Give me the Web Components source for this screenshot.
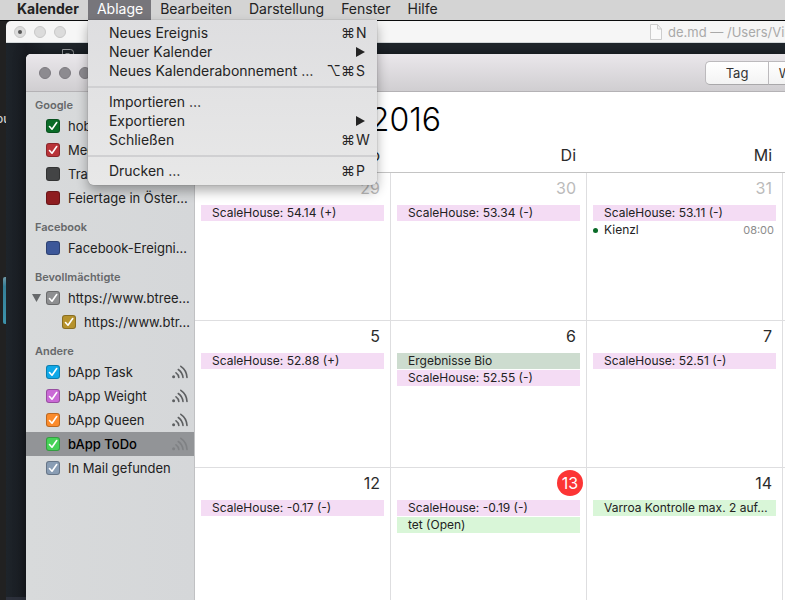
<!DOCTYPE html>
<html lang="de">
<head>
<meta charset="utf-8">
<title>Kalender</title>
<style>
  html, body { margin: 0; height: 100%; }
  body {
    font-family: Inter, "Liberation Sans", sans-serif;
    font-size: 13px;
    color: #222;
    background: #212121;
    overflow: hidden;
  }
</style>
</head>
<body>
<desk-top>
  <menu-bar slot="bar">
    <menu-title strong>Kalender</menu-title>
    <menu-title open>Ablage
      <drop-menu slot="menu">
        <menu-entry mod="⌘" key="N">Neues Ereignis</menu-entry>
        <menu-entry sub>Neuer Kalender</menu-entry>
        <menu-entry mod="⌥⌘" key="S">Neues Kalenderabonnement …</menu-entry>
        <menu-line></menu-line>
        <menu-entry>Importieren …</menu-entry>
        <menu-entry sub>Exportieren</menu-entry>
        <menu-entry mod="⌘" key="W">Schließen</menu-entry>
        <menu-line></menu-line>
        <menu-entry mod="⌘" key="P">Drucken …</menu-entry>
      </drop-menu>
    </menu-title>
    <menu-title>Bearbeiten</menu-title>
    <menu-title>Darstellung</menu-title>
    <menu-title>Fenster</menu-title>
    <menu-title>Hilfe</menu-title>
  </menu-bar>

  <edge-scraps></edge-scraps>
  <editor-window>de.md — /Users/Vin</editor-window>

  <calendar-window>
    <seg-control slot="tools"></seg-control>
    <side-section slot="side" heading="Google">
      <side-item color="#0a6b27" checked>hobby</side-item>
      <side-item color="#b93338" checked>Medizin</side-item>
      <side-item color="#434445">Training</side-item>
      <side-item color="#8e1d20">Feiertage in Öster…</side-item>
    </side-section>
    <side-section slot="side" heading="Facebook">
      <side-item color="#3c5799">Facebook-Ereigni…</side-item>
    </side-section>
    <side-section slot="side" heading="Bevollmächtigte">
      <side-item color="#8e8f91" checked expanded>https://www.btree…</side-item>
      <side-item color="#b6922c" checked nested>https://www.btr…</side-item>
    </side-section>
    <side-section slot="side" heading="Andere">
      <side-item color="#0fa8e8" checked feed>bApp Task</side-item>
      <side-item color="#ca69d6" checked feed>bApp Weight</side-item>
      <side-item color="#fb8b2b" checked feed>bApp Queen</side-item>
      <side-item color="#46d257" checked feed selected>bApp ToDo</side-item>
      <side-item color="#899db4" checked>In Mail gefunden</side-item>
    </side-section>

    <month-view month="September" year="2016">
      <day-cell day="29" outside first><cal-event>ScaleHouse: 54.14 (+)</cal-event></day-cell>
      <day-cell day="30" outside first><cal-event>ScaleHouse: 53.34 (-)</cal-event></day-cell>
      <day-cell day="31" outside first><cal-event>ScaleHouse: 53.11 (-)</cal-event><cal-event kind="timed" time="08:00">Kienzl</cal-event></day-cell>
      <day-cell first></day-cell>
      <day-cell day="5"><cal-event>ScaleHouse: 52.88 (+)</cal-event></day-cell>
      <day-cell day="6"><cal-event kind="sage">Ergebnisse Bio</cal-event><cal-event>ScaleHouse: 52.55 (-)</cal-event></day-cell>
      <day-cell day="7"><cal-event>ScaleHouse: 52.51 (-)</cal-event></day-cell>
      <day-cell></day-cell>
      <day-cell day="12"><cal-event>ScaleHouse: -0.17 (-)</cal-event></day-cell>
      <day-cell day="13" today><cal-event>ScaleHouse: -0.19 (-)</cal-event><cal-event kind="green">tet (Open)</cal-event></day-cell>
      <day-cell day="14"><cal-event kind="green">Varroa Kontrolle max. 2 auf…</cal-event></day-cell>
      <day-cell></day-cell>
    </month-view>
  </calendar-window>
</desk-top>

<script>
function define(name, render) {
  customElements.define(name, class extends HTMLElement {
    constructor() {
      super();
      this.attachShadow({ mode: 'open' });
    }
    connectedCallback() {
      this.shadowRoot.innerHTML = render(this);
    }
  });
}
const attr = (el, name) => el.getAttribute(name) || '';

define('desk-top', () => `
  <style>
    :host { display: flex; flex-direction: column; height: 100vh; position: relative; overflow: hidden; }
    .bar { position: relative; z-index: 5; }
    .area { flex: 1; position: relative; }
  </style>
  <div class="bar"><slot name="bar"></slot></div>
  <main class="area"><slot></slot></main>`);

define('menu-bar', () => `
  <style>
    :host { display: flex; height: 20px; padding-left: 8px; background: #d4d4d4; box-shadow: 0 1px #0b0c0d; }
  </style>
  <slot></slot>`);

define('menu-title', el => `
  <style>
    :host { display: block; position: relative; }
    button { height: 20px; padding: 0 8px 2px 9px; border: 0; background: none; font: inherit; font-size: 14px; line-height: 18px; color: #222; white-space: nowrap; }
    :host([strong]) button { font-weight: 700; padding-right: 9px; }
    :host([open]) button { background: #77767b; color: #fff; }
    .menu { position: absolute; left: 0; top: 20px; }
  </style>
  <button type="button"${el.hasAttribute('open') ? ' aria-expanded="true"' : ''}><slot></slot></button>
  <div class="menu"><slot name="menu"></slot></div>`);

define('drop-menu', () => `
  <style>
    :host { display: block; min-width: 289px; padding: 4px 0; box-sizing: border-box; background: linear-gradient(#dedee0, #e8e8e8); border-radius: 0 0 6px 6px; box-shadow: 0 0 1px rgba(0,0,0,.5), 0 6px 12px rgba(0,0,0,.32); }
  </style>
  <div role="menu"><slot></slot></div>`);

define('menu-entry', el => `
  <style>
    :host { display: block; }
    button { display: flex; align-items: center; width: 100%; height: 19px; padding: 0 0 2px 21px; border: 0; background: none; font: inherit; font-size: 14px; line-height: 17px; color: #242424; text-align: left; white-space: nowrap; }
    .label { flex: 1; }
    .key { width: 22px; padding-left: 1px; box-sizing: border-box; }
    svg { width: 9px; height: 10px; margin-right: 12px; }
  </style>
  <button type="button" role="menuitem"><span class="label"><slot></slot></span>${
    el.hasAttribute('sub') ? '<svg viewBox="0 0 9 10"><path d="M0 0 9 5 0 10z" fill="#242424"/></svg>' :
    el.hasAttribute('key') ? `<span class="mod">${attr(el, 'mod')}</span><span class="key">${attr(el, 'key')}</span>` : ''
  }</button>`);

define('menu-line', () => `
  <style>
    :host { display: flex; align-items: center; height: 12px; }
    hr { flex: 1; height: 2px; margin: 0; border: 0; background: #d0d0d2; }
  </style>
  <hr>`);

define('edge-scraps', () => `
  <style>
    :host { position: absolute; left: 0; top: 0; bottom: 0; width: 6px; overflow: hidden; }
    span { position: absolute; left: -4px; top: 91px; font-size: 12px; line-height: 16px; font-weight: 500; color: #cfcfcf; }
    i { position: absolute; left: 3px; top: 257px; width: 3px; height: 47px; border-radius: 2px 0 0 2px; background: linear-gradient(#6f98a6, #357f97 20%, #3c93ab); }
  </style>
  <span>ou</span><i></i>`);

define('traffic-lights', () => `
  <style>
    :host { display: flex; gap: 8px; }
    button { width: 12px; height: 12px; padding: 0; border: 1px solid #7d7a80; border-radius: 50%; background: #8d8b90; display: grid; place-items: center; }
    :host([faded]) button { border-color: #c8c8c8; background: #dcdcdc; }
    :host([faded]) button:first-of-type::after { content: ""; width: 4px; height: 4px; border-radius: 50%; background: #555; }
  </style>
  <button type="button" aria-label="Schließen"></button><button type="button" aria-label="Minimieren"></button><button type="button" aria-label="Zoomen"></button>`);

define('editor-window', () => `
  <style>
    :host { position: absolute; left: 6px; right: 0; top: 1px; bottom: 0; display: flex; flex-direction: column; border-radius: 5px 0 0 0; overflow: hidden; background: linear-gradient(90deg, #1e242a, #191c22 20px, #1f252b 40px); }
    header { display: flex; align-items: center; height: 22px; padding-left: 8px; box-sizing: border-box; background: #f6f6f6; border-bottom: 1px solid #d4d8da; }
    .title { display: flex; align-items: center; gap: 6px; margin-left: auto; width: 135px; color: #a9a9a9; white-space: nowrap; line-height: 18px; }
    .title svg { flex: none; }
    .tab { margin: 6px 0 0 56px; }
    .foot { margin-top: auto; height: 3px; background: #2c303b; }
  </style>
  <header><traffic-lights faded></traffic-lights>
    <div class="title"><svg width="12" height="16" viewBox="0 0 12 16"><path d="M.5.5h7l4 4.500v10.500H.5zM7.500.5v4.500h4" fill="#fafafa" stroke="#cdcdcd"/></svg><slot></slot></div>
  </header>
  <svg class="tab" width="13" height="16" viewBox="0 0 13 16"><path d="M.5 15V.5h8q3 0 3 3v11.500M3.500 4.500h4" fill="none" stroke="#a2a6a9"/></svg>
  <div class="foot"></div>`);

define('calendar-window', () => `
  <style>
    :host { position: absolute; left: 26px; right: 0; top: 34px; bottom: 0; display: flex; flex-direction: column; border-radius: 5px 0 0 0; overflow: hidden; background: #fff; box-shadow: 0 0 12px rgba(0,0,0,.5); }
    header { flex: none; display: flex; align-items: center; justify-content: space-between; height: 38px; padding-left: 13px; box-sizing: border-box; background: linear-gradient(#eae7eb, #d0ced1); border-bottom: 1px solid #b4b2b5; }
    .body { flex: 1; display: flex; min-height: 0; }
    aside { flex: none; width: 169px; box-sizing: border-box; padding-top: 4px; display: flex; flex-direction: column; gap: 8px; background: linear-gradient(90deg, #d8dadb, #d5d7d9); border-right: 1px solid #c0c1c3; }
    .main { flex: 1; min-width: 0; display: flex; }
  </style>
  <header><traffic-lights></traffic-lights><slot name="tools"></slot></header>
  <div class="body"><aside><slot name="side"></slot></aside><div class="main"><slot></slot></div></div>`);

define('seg-control', () => `
  <style>
    :host { display: flex; width: 80px; overflow: hidden; }
    button { flex: none; width: 63px; height: 24px; padding: 0; border: 1px solid #bcbabd; border-right-width: 0; border-bottom-color: #a9a8aa; background: linear-gradient(#fff, #f3f3f3); font: inherit; font-size: 13px; line-height: 20px; color: #333; }
    button:first-of-type { border-radius: 5px 0 0 5px; }
  </style>
  <button type="button">Tag</button><button type="button">Woche</button>`);

define('side-section', el => `
  <style>
    :host { display: block; }
    h2 { margin: 0; padding-left: 9px; font-size: 11px; line-height: 18px; font-weight: 600; color: #66686a; }
  </style>
  <h2>${attr(el, 'heading')}</h2><slot></slot>`);

define('side-item', el => `
  <style>
    :host { display: flex; align-items: center; height: 24px; padding: 0 6px; }
    :host([nested]) { padding-left: 22px; }
    :host([selected]) { background: #929497; color: #000; font-weight: 500; }
    .toggle { width: 9px; height: 8px; margin-right: 5px; flex: none; }
    label { flex: 1; min-width: 0; display: flex; align-items: center; gap: 8px; line-height: 20px; white-space: nowrap; }
    .box { flex: none; display: grid; width: 14px; height: 14px; }
    .box > * { grid-area: 1 / 1; }
    input { appearance: none; margin: 0; width: 14px; height: 14px; border: 1px solid rgba(0,0,0,.25); border-radius: 3px; background: ${attr(el, 'color')}; }
    .tick { visibility: hidden; pointer-events: none; z-index: 1; }
    input:checked + .tick { visibility: visible; }
    :host([selected]) .feed { opacity: .35; }
  </style>
  <svg class="toggle" viewBox="0 0 9 8">${el.hasAttribute('expanded') ? '<path d="M0 0h9L4.500 8z" fill="#66686a"/>' : ''}</svg>
  <label><span class="box"><input type="checkbox"${el.hasAttribute('checked') ? ' checked' : ''}><svg class="tick" width="14" height="14" viewBox="0 0 14 14"><path d="M3.500 7.500 6 10.200 10.700 3.500" fill="none" stroke="#fff" stroke-width="1.600" stroke-linecap="round" stroke-linejoin="round"/></svg></span><span><slot></slot></span></label>
  ${el.hasAttribute('feed') ? '<svg class="feed" width="16" height="14" viewBox="0 0 16 14" fill="none" stroke="#5d5f61" stroke-width="1.600" stroke-linecap="round"><circle cx="1.600" cy="11.800" r="1.500" fill="#5d5f61" stroke="none"/><path d="M4 7.800Q6.500 9.500 6.800 12.500M6.300 4.500Q10.500 7.500 11 12.500M8.800 1.300Q14.600 5 15 12.500"/></svg>' : ''}`);

define('month-view', el => `
  <style>
    :host { flex: 1; min-width: 0; display: flex; flex-direction: column; background: #fff; }
    h1 { flex: none; display: flex; justify-content: flex-end; gap: 9px; width: 246px; height: 46px; margin: 0; padding-top: 9px; box-sizing: border-box; font-size: 32px; line-height: 38px; font-weight: 300; color: #000; white-space: nowrap; }
    h1 b { font-weight: 600; }
    .days, .weeks { flex: none; display: grid; grid-template-columns: repeat(3, minmax(0, 1fr)) 2px; }
    .days { height: 35px; padding-top: 5px; box-sizing: border-box; border-bottom: 1px solid #c4c4c4; font-size: 16px; line-height: 24px; text-align: right; color: #2b2b2b; }
    .days span { padding-right: 11px; }
    .days span:last-child { padding: 0; }
    .weeks { grid-auto-rows: 147px; }
  </style>
  <h1><b>${attr(el, 'month')}</b><span>${attr(el, 'year')}</span></h1>
  <div class="days"><span>Mo</span><span>Di</span><span>Mi</span><span></span></div>
  <div class="weeks"><slot></slot></div>`);

define('day-cell', el => `
  <style>
    :host { display: flex; flex-direction: column; min-width: 0; overflow: hidden; border-top: 1px solid #dedee0; border-right: 1px solid #dedee0; }
    :host([first]) { border-top: 0; }
    :host(:not([day])) { border-right: 0; }
    time { flex: none; align-self: flex-end; height: 26px; margin: 2px 10px 4px 0; font-size: 16px; line-height: 26px; color: #2b2b2b; }
    :host([outside]) time { color: #bbb; }
    :host([today]) time { width: 26px; margin-right: 3px; border-radius: 50%; background: #fc3535; color: #fff; text-align: center; }
    .events { display: grid; gap: 1px; margin: 0 6px; }
  </style>
  ${el.hasAttribute('day') ? `<time>${attr(el, 'day')}</time>` : ''}<div class="events"><slot></slot></div>`);

define('cal-event', el => `
  <style>
    :host { display: flex; align-items: center; height: 16px; padding-left: 11px; background: #f4dcf4; color: #222; font-size: 12px; line-height: 16px; white-space: nowrap; min-width: 0; overflow: hidden; }
    :host([kind=sage]) { background: #cddccf; }
    :host([kind=green]) { background: #d9f6d8; }
    :host([kind=timed]) { background: none; padding: 0 2px 0 0; }
    i { width: 5px; height: 5px; margin-right: 6px; border-radius: 50%; background: #0a6b27; }
    time { margin-left: auto; font-size: 11px; color: #8c8c8c; }
  </style>
  ${el.hasAttribute('time') ? '<i></i>' : ''}<span><slot></slot></span>${el.hasAttribute('time') ? `<time>${attr(el, 'time')}</time>` : ''}`);
</script>
</body>
</html>
